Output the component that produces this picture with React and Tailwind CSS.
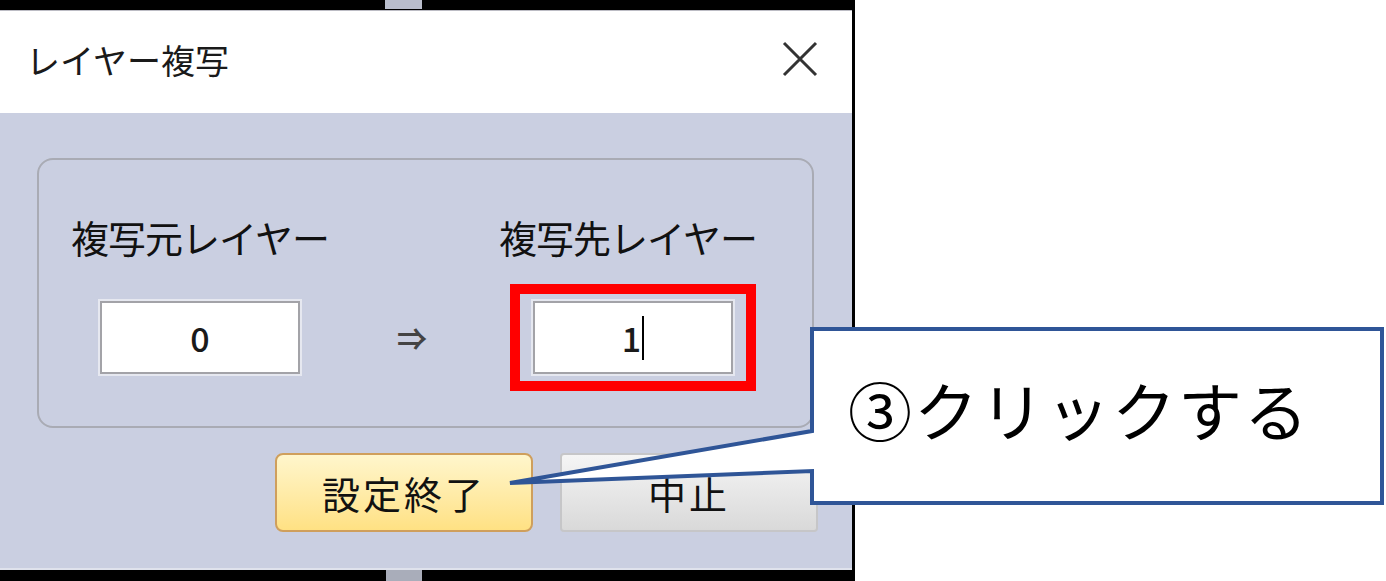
import React from "react";

const jp = { fontFamily: '"Noto Sans CJK JP", "Noto Sans", sans-serif' };

const Callout = () => (
  <>
    <svg className="absolute left-[505px] top-[325px]" width="881" height="185" viewBox="0 0 881 185">
      <path d="M307 4 H877 V178 H307 V146 L5 158 L307 106 Z" fill="#ffffff" stroke="#2f5597" strokeWidth="4" />
    </svg>
    <div className="absolute left-[848px] top-[376px] text-[64px] leading-none text-black tracking-[2px]" style={jp}>
      ③クリックする
    </div>
  </>
);

const Field = ({ value, cursor }) => (
  <div className="w-[200px] h-[73px] bg-white border-2 border-[#a3a3a8] shadow-[0_0_0_2px_#e6e8f0] flex items-center justify-center text-[34px] font-medium text-[#1a1a1a]" style={jp}>
    <span>{value}</span>
    {cursor && <span className="w-[2px] h-[44px] bg-black ml-[1px]" />}
  </div>
);

export default function App() {
  return (
    <div className="relative w-[1386px] h-[581px] bg-white flex overflow-hidden">
      <div className="w-[855px] h-full flex flex-col border-r-[3px] border-black">
        <div className="h-[10px] bg-black flex shrink-0">
          <div className="ml-[385px] w-[37px] h-[9px] bg-[#b9bdcc]" />
        </div>
        <div className="h-[103px] shrink-0 bg-white border-t border-[#bcbcc4] flex items-center justify-between pl-[26px] pr-[34px]">
          <span className="text-[34px] leading-none text-[#1a1a1a] -mt-[4px]" style={jp}>レイヤー複写</span>
          <svg width="36" height="36" viewBox="0 0 36 36" className="-mt-[6px]">
            <path d="M2 2 L34 34 M34 2 L2 34" stroke="#333" strokeWidth="3" />
          </svg>
        </div>
        <div className="flex-1 bg-[#cacfe1] pt-[45px] flex flex-col">
          <div className="ml-[37px] w-[777px] h-[270px] border-2 border-[#a9abb4] rounded-[16px] pt-[58px]">
            <div className="grid grid-cols-[322px_102px_340px] gap-y-[28px]">
              <div className="text-[38px] leading-none tracking-[-1px] text-center text-[#111]" style={jp}>複写元レイヤー</div>
              <div />
              <div className="text-[38px] leading-none tracking-[-1px] text-center text-[#111] -ml-[10px]" style={jp}>複写先レイヤー</div>
              <div className="h-[107px] flex items-center justify-center">
                <Field value="0" />
              </div>
              <div className="h-[107px] flex items-center justify-center text-[30px] font-bold text-[#444]" style={jp}>⇒</div>
              <div className="h-[107px] flex items-center justify-center">
                <div className="border-[10px] border-[#ff0000] px-[13px] py-[7px]">
                  <Field value="1" cursor />
                </div>
              </div>
            </div>
          </div>
          <div className="mt-[25px] flex justify-end gap-[27px] pr-[34px]">
            <button className="w-[258px] h-[79px] rounded-[8px] border-2 border-[#cf9f5c] bg-gradient-to-b from-[#fff6cc] to-[#ffe183] text-[38px] tracking-[3px] text-[#111]" style={jp}>
              設定終了
            </button>
            <button className="w-[258px] h-[79px] rounded-[4px] border-2 border-[#c6c6c8] bg-gradient-to-b from-[#f5f5f5] to-[#d9d9d9] text-[38px] tracking-[3px] text-[#111]" style={jp}>
              中止
            </button>
          </div>
        </div>
        <div className="h-[2px] bg-[#dfe2ec] shrink-0" />
        <div className="h-[11px] bg-black flex shrink-0">
          <div className="ml-[386px] w-[36px] h-full bg-[#a9adba]" />
        </div>
      </div>
      <Callout />
    </div>
  );
}
